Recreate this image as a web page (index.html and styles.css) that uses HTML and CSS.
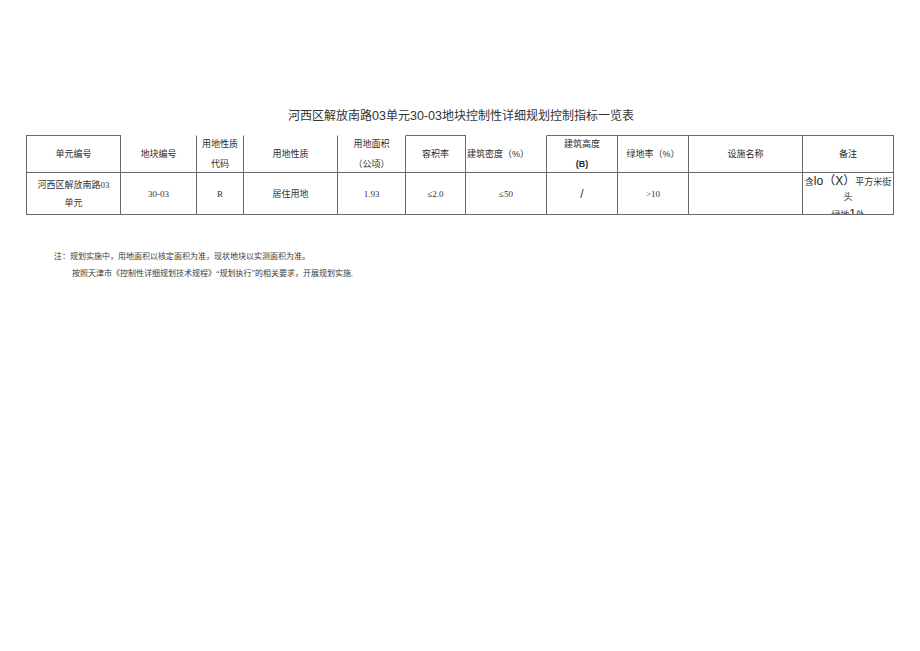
FILE: index.html
```html
<!DOCTYPE html>
<html lang="zh">
<head>
<meta charset="utf-8">
<title>河西区解放南路03单元30-03地块控制性详细规划控制指标一览表</title>
<link rel="stylesheet" href="styles.css">
</head>
<body>
<div class="page">
  <h1 class="title">河西区解放南路<span class="num">03</span>单元<span class="num">30-03</span>地块控制性详细规划控制指标一览表</h1>
  <div class="table">
    <div class="cell head first top">单元编号</div>
    <div class="cell head">地块编号</div>
    <div class="cell head"><span>用地性质<br>代码</span></div>
    <div class="cell head">用地性质</div>
    <div class="cell head"><span>用地面积<br>（公顷）</span></div>
    <div class="cell head top">容积率</div>
    <div class="cell head left">建筑密度（%）</div>
    <div class="cell head top"><span>建筑高度<br><b>(B)</b></span></div>
    <div class="cell head top">绿地率（%）</div>
    <div class="cell head top">设施名称</div>
    <div class="cell head top">备注</div>

    <div class="cell body first"><span>河西区解放南路03<br>单元</span></div>
    <div class="cell body">30-03</div>
    <div class="cell body">R</div>
    <div class="cell body">居住用地</div>
    <div class="cell body">1.93</div>
    <div class="cell body">≤2.0</div>
    <div class="cell body">≤50</div>
    <div class="cell body slash">/</div>
    <div class="cell body">&gt;10</div>
    <div class="cell body"></div>
    <div class="cell body remark">
      <div class="remark-text">
        <span class="rline">含<span class="big">lo（X）</span>平方米街</span>
        <span class="rline">头</span>
        <span class="rline">绿地<b class="big">1</b>处</span>
      </div>
    </div>
  </div>
  <div class="notes">
    <p class="note">注：规划实施中，用地面积以核定面积为准，现状地块以实测面积为准。</p>
    <p class="note indent">按照天津市《控制性详细规划技术规程》“规划执行”的相关要求，开展规划实施.</p>
  </div>
</div>
</body>
</html>
```

FILE: styles.css
```css
html, body {
  margin: 0;
  padding: 0;
  background: #ffffff;
}

.page {
  width: 920px;
  height: 651px;
  padding-top: 108px;
  box-sizing: border-box;
  color: #2a2a2a;
}

.title {
  margin: 0 0 11px 0;
  font-family: "Liberation Serif", "Noto Sans CJK SC", serif;
  font-size: 12px;
  font-weight: normal;
  line-height: 16px;
  text-align: center;
  color: #333;
  padding-left: 2px;
}

.title .num {
  font-family: "Liberation Sans", "Noto Sans CJK SC", sans-serif;
  font-size: 12.5px;
}

.table {
  display: grid;
  grid-template-columns: 95px 76px 47px 94px 68px 60px 81px 71px 71px 114px 91px;
  margin-left: 26px;
  width: 868px;
}

.cell {
  box-sizing: border-box;
  border-right: 1px solid #6a6a6a;
  border-bottom: 1px solid #6a6a6a;
  display: flex;
  align-items: center;
  justify-content: center;
  text-align: center;
}

.first {
  border-left: 1px solid #6a6a6a;
}

.head {
  height: 38px;
  border-top: 1px solid transparent;
  font-family: "Liberation Sans", "Noto Sans CJK SC", sans-serif;
  font-size: 9px;
  line-height: 20px;
  color: #2a2a2a;
}

.head.top {
  border-top-color: #6a6a6a;
}

.head.left {
  justify-content: flex-start;
  text-align: left;
  padding-left: 1px;
}

.head b {
  font-weight: bold;
}

.body {
  height: 42px;
  font-family: "Liberation Serif", "Noto Sans CJK SC", serif;
  font-size: 9px;
  line-height: 18px;
  color: #333;
}

.slash {
  font-family: "Liberation Sans", "Noto Sans CJK SC", sans-serif;
  font-size: 12px;
}

.remark {
  align-items: flex-start;
  overflow: hidden;
}

.remark-text {
  padding-top: 1px;
  display: flex;
  flex-direction: column;
  align-items: center;
}

.rline {
  display: block;
  line-height: 15px;
  white-space: nowrap;
}

.rline:last-child {
  line-height: 19px;
}

.big {
  font-family: "Liberation Sans", "Noto Sans CJK SC", sans-serif;
  font-size: 12px;
  font-weight: normal;
  color: #222;
}

.notes {
  margin-top: 33px;
  padding-left: 54px;
  font-family: "Liberation Serif", "Noto Sans CJK SC", serif;
  font-size: 8px;
  line-height: 17px;
  color: #3a3a3a;
}

.note {
  margin: 0;
}

.note.indent {
  padding-left: 18px;
}
```
